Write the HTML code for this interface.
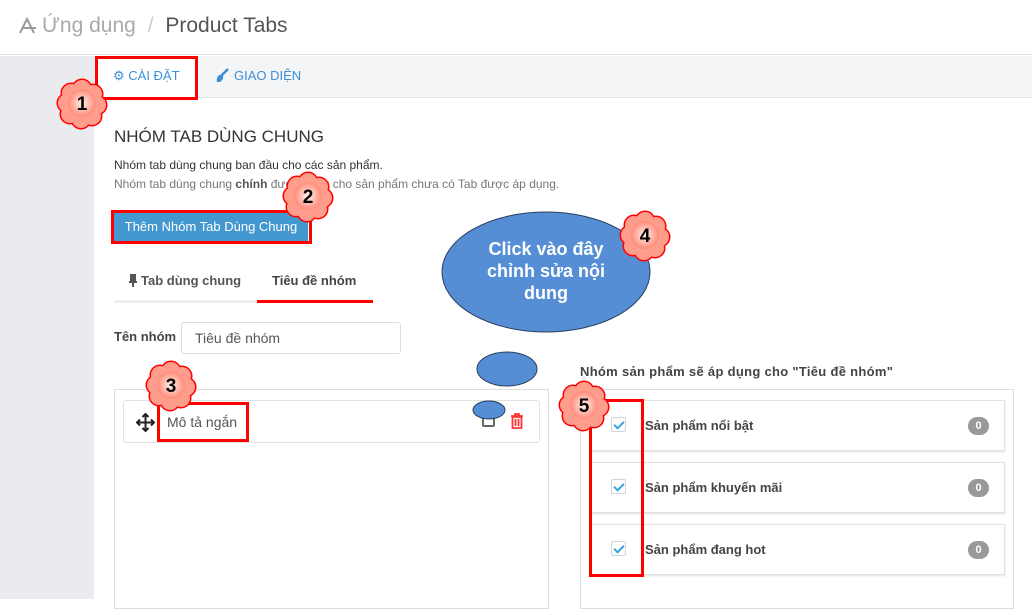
<!DOCTYPE html>
<html><head><meta charset="utf-8"><style>
*{margin:0;padding:0;box-sizing:border-box}
body{width:1032px;height:599px;overflow:hidden;background:#fff;font-family:"Liberation Sans",sans-serif;position:relative;color:#333}
.a{position:absolute}
.rb{position:absolute;border:3px solid #f00}
.row{position:absolute;border:1px solid #e2e2e2;background:#fff;box-shadow:0 1px 2px rgba(0,0,0,.12)}
.chk{position:absolute;width:15px;height:15px;border:1px solid #cdd6de;border-radius:2px;background:#fff}
.chk:after{content:"";position:absolute;left:4px;top:1px;width:4px;height:8px;border:solid #3aa3e3;border-width:0 2px 2px 0;transform:rotate(45deg)}
.lbl{position:absolute;font-size:13px;font-weight:bold;color:#444}
.bdg{position:absolute;width:21px;height:18px;border-radius:9px;background:#999;color:#fff;font-size:11px;font-weight:bold;text-align:center;line-height:18px}
</style></head><body>
<div class="a" style="left:0;top:0;width:1032px;height:55px;border-bottom:1px solid #e3e3e3"></div>
<svg class="a" style="left:18px;top:17px" width="20" height="18"><path d="M2 16 L9 2 L16 16 M5 11 H18" stroke="#999" stroke-width="2" fill="none"/></svg>
<div class="a" style="left:42px;top:14px;font-size:21px;color:#aaa">Ứng dụng <span style="color:#ccc;margin:0 6px">/</span> <span style="color:#555">Product Tabs</span></div>
<div class="a" style="left:0;top:56px;width:94px;height:543px;background:#e9ebee"></div>
<div class="a" style="left:94px;top:56px;width:938px;height:42px;background:#f4f5f7;border-bottom:1px solid #e3e5e8"></div>
<div class="a" style="left:97px;top:58px;width:98px;height:40px;background:#fff"></div>
<div class="a" style="left:113px;top:68px;font-size:13px;color:#3d8fd6">⚙ CÀI ĐẶT</div>
<svg class="a" style="left:216px;top:68px" width="14" height="14"><path d="M12 1 L5 8 M2 13 C2 10 3 8 5 8 L6 9 C6 11 4 13 2 13Z" stroke="#3d8fd6" stroke-width="2.5" fill="#3d8fd6"/></svg>
<div class="a" style="left:234px;top:68px;font-size:13px;color:#3d8fd6">GIAO DIỆN</div>
<div class="rb" style="left:95px;top:56px;width:103px;height:44px"></div>
<div class="a" style="left:114px;top:127px;font-size:17px;color:#333">NHÓM TAB DÙNG CHUNG</div>
<div class="a" style="left:114px;top:158px;font-size:12px;color:#333">Nhóm tab dùng chung ban đầu cho các sản phẩm.</div>
<div class="a" style="left:114px;top:177px;font-size:12px;color:#777">Nhóm tab dùng chung <b style="color:#555">chính</b> được dùng cho sản phẩm chưa có Tab được áp dụng.</div>
<div class="a" style="left:114px;top:212px;width:194px;height:29px;background:#4399cf;color:#fff;font-size:13px;text-align:center;line-height:29px">Thêm Nhóm Tab Dùng Chung</div>
<div class="rb" style="left:111px;top:210px;width:201px;height:34px"></div>
<div class="a" style="left:114px;top:300px;width:143px;height:3px;background:#eee"></div>
<div class="a" style="left:257px;top:300px;width:116px;height:3px;background:#f00"></div>
<svg class="a" style="left:128px;top:274px" width="10" height="14"><path d="M2 1 H8 M3 1 V7 H7 V1 M1 8 H9 M5 8 V13" stroke="#555" stroke-width="2" fill="#555"/></svg>
<div class="a" style="left:141px;top:273px;font-size:13px;font-weight:bold;color:#555">Tab dùng chung</div>
<div class="a" style="left:272px;top:273px;font-size:13px;font-weight:bold;color:#444">Tiêu đề nhóm</div>
<div class="a" style="left:114px;top:329px;font-size:13px;font-weight:bold;color:#444">Tên nhóm</div>
<div class="a" style="left:181px;top:322px;width:220px;height:32px;border:1px solid #ddd;border-radius:3px;font-size:14px;color:#555;padding:7px 13px">Tiêu đề nhóm</div>
<div class="a" style="left:114px;top:389px;width:435px;height:220px;border:1px solid #ddd"></div>
<div class="a" style="left:123px;top:400px;width:417px;height:43px;border:1px solid #e2e2e2;border-radius:3px"></div>
<svg class="a" style="left:136px;top:413px" width="19" height="19"><path d="M9.5 1 V18 M1 9.5 H18 M6.5 4 L9.5 1 L12.5 4 M6.5 15 L9.5 18 L12.5 15 M4 6.5 L1 9.5 L4 12.5 M15 6.5 L18 9.5 L15 12.5" stroke="#222" stroke-width="2" fill="none"/></svg>
<div class="a" style="left:167px;top:414px;font-size:14px;color:#555">Mô tả ngắn</div>
<div class="rb" style="left:157px;top:402px;width:92px;height:40px"></div>
<div class="a" style="left:482px;top:415px;width:13px;height:12px;border:2px solid #666;border-radius:2px"></div>
<svg class="a" style="left:510px;top:413px" width="14" height="16"><path d="M1 3 H13 M5 3 V1 H9 V3 M2.5 4 H11.5 V15 H2.5Z M5.5 6 V13 M8.5 6 V13" stroke="#f33" stroke-width="1.8" fill="none"/></svg>
<div class="a" style="left:580px;top:364px;font-size:13px;font-weight:bold;color:#444;letter-spacing:.3px">Nhóm sản phẩm sẽ áp dụng cho "Tiêu đề nhóm"</div>
<div class="a" style="left:580px;top:389px;width:434px;height:220px;border:1px solid #ddd"></div>
<div class="row" style="left:591px;top:400px;width:414px;height:51px"></div>
<div class="row" style="left:591px;top:462px;width:414px;height:51px"></div>
<div class="row" style="left:591px;top:524px;width:414px;height:51px"></div>
<div class="chk" style="left:611px;top:417px"></div><div class="lbl" style="left:645px;top:418px">Sản phẩm nổi bật</div><div class="bdg" style="left:968px;top:417px">0</div>
<div class="chk" style="left:611px;top:479px"></div><div class="lbl" style="left:645px;top:480px">Sản phẩm khuyến mãi</div><div class="bdg" style="left:968px;top:479px">0</div>
<div class="chk" style="left:611px;top:541px"></div><div class="lbl" style="left:645px;top:542px">Sản phẩm đang hot</div><div class="bdg" style="left:968px;top:541px">0</div>
<div class="rb" style="left:589px;top:399px;width:55px;height:178px"></div>
<svg class="a" style="left:0;top:0" width="1032" height="599">
<ellipse cx="546" cy="272" rx="104" ry="60" fill="#558ed5" stroke="#2a3f5f" stroke-width="1"/>
<ellipse cx="507" cy="369" rx="30" ry="17" fill="#558ed5" stroke="#2a3f5f" stroke-width="1"/>
<ellipse cx="489" cy="410" rx="16" ry="9" fill="#558ed5" stroke="#2a3f5f" stroke-width="1"/>
<g font-family="Liberation Sans" font-weight="bold" font-size="18" fill="#fff" text-anchor="middle">
<text x="546" y="255">Click vào đây</text><text x="546" y="277">chỉnh sửa nội</text><text x="546" y="299">dung</text></g>
<defs><radialGradient id="g"><stop offset="0" stop-color="#fff2ec"/><stop offset="1" stop-color="#ff8a78"/></radialGradient>
<g id="c"><circle cx="0" cy="-14" r="9"/><circle cx="11" cy="-9" r="9"/><circle cx="15" cy="2" r="9"/><circle cx="10" cy="13" r="9"/><circle cx="-1" cy="16" r="9"/><circle cx="-12" cy="11" r="9"/><circle cx="-15" cy="0" r="9"/><circle cx="-11" cy="-10" r="9"/><circle cx="0" cy="0" r="15"/></g></defs>
<g font-family="Liberation Sans" font-weight="bold" font-size="19" text-anchor="middle">
<g transform="translate(82,103)"><use href="#c" fill="none" stroke="#f00" stroke-width="3"/><use href="#c" fill="#ff9d8c"/><circle r="14" fill="url(#g)"/><text y="7">1</text></g>
<g transform="translate(308,196)"><use href="#c" fill="none" stroke="#f00" stroke-width="3"/><use href="#c" fill="#ff9d8c"/><circle r="14" fill="url(#g)"/><text y="7">2</text></g>
<g transform="translate(171,385)"><use href="#c" fill="none" stroke="#f00" stroke-width="3"/><use href="#c" fill="#ff9d8c"/><circle r="14" fill="url(#g)"/><text y="7">3</text></g>
<g transform="translate(645,235)"><use href="#c" fill="none" stroke="#f00" stroke-width="3"/><use href="#c" fill="#ff9d8c"/><circle r="14" fill="url(#g)"/><text y="7">4</text></g>
<g transform="translate(584,405)"><use href="#c" fill="none" stroke="#f00" stroke-width="3"/><use href="#c" fill="#ff9d8c"/><circle r="14" fill="url(#g)"/><text y="7">5</text></g>
</g>
</svg>
</body></html>
